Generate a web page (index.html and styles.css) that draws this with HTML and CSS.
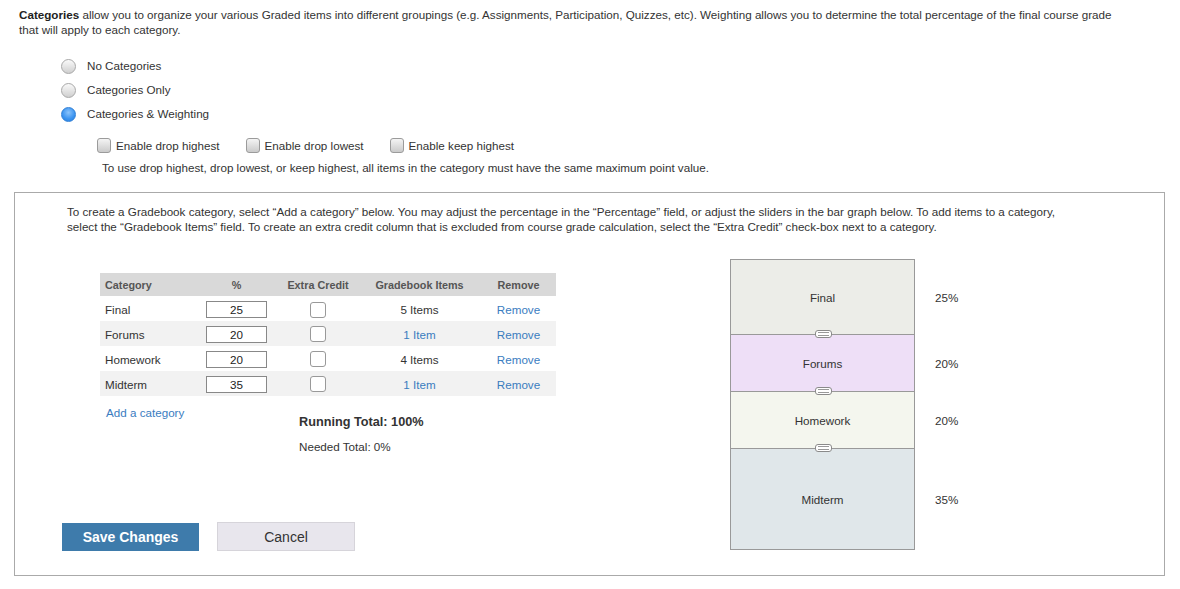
FILE: index.html
```html
<!DOCTYPE html>
<html>
<head>
<meta charset="utf-8">
<link rel="stylesheet" href="styles.css">
</head>
<body>
<div class="page">
  <p class="intro"><b>Categories</b> allow you to organize your various Graded items into different groupings (e.g. Assignments, Participation, Quizzes, etc). Weighting allows you to determine the total percentage of the final course grade that will apply to each category.</p>

  <div class="radios">
    <label class="radio-row"><span class="radio"></span>No Categories</label>
    <label class="radio-row"><span class="radio"></span>Categories Only</label>
    <label class="radio-row"><span class="radio on"></span>Categories &amp; Weighting</label>
  </div>

  <div class="options">
    <div class="opt-row">
      <label class="opt"><span class="cb"></span>Enable drop highest</label>
      <label class="opt"><span class="cb"></span>Enable drop lowest</label>
      <label class="opt"><span class="cb"></span>Enable keep highest</label>
    </div>
    <p class="opt-note">To use drop highest, drop lowest, or keep highest, all items in the category must have the same maximum point value.</p>
  </div>

  <div class="box">
    <p class="box-intro">To create a Gradebook category, select “Add a category” below. You may adjust the percentage in the “Percentage” field, or adjust the sliders in the bar graph below. To add items to a category, select the “Gradebook Items” field. To create an extra credit column that is excluded from course grade calculation, select the “Extra Credit” check-box next to a category.</p>

    <div class="main">
      <div class="left">
        <table class="cats">
          <thead>
            <tr><th class="c1">Category</th><th class="c2">%</th><th class="c3">Extra Credit</th><th class="c4">Gradebook Items</th><th class="c5">Remove</th></tr>
          </thead>
          <tbody>
            <tr><td class="c1">Final</td><td class="c2"><span class="num">25</span></td><td class="c3"><span class="ec"></span></td><td class="c4">5 Items</td><td class="c5"><a class="link">Remove</a></td></tr>
            <tr class="alt"><td class="c1">Forums</td><td class="c2"><span class="num">20</span></td><td class="c3"><span class="ec"></span></td><td class="c4"><a class="link">1 Item</a></td><td class="c5"><a class="link">Remove</a></td></tr>
            <tr><td class="c1">Homework</td><td class="c2"><span class="num">20</span></td><td class="c3"><span class="ec"></span></td><td class="c4">4 Items</td><td class="c5"><a class="link">Remove</a></td></tr>
            <tr class="alt"><td class="c1">Midterm</td><td class="c2"><span class="num">35</span></td><td class="c3"><span class="ec"></span></td><td class="c4"><a class="link">1 Item</a></td><td class="c5"><a class="link">Remove</a></td></tr>
          </tbody>
        </table>
        <div class="below">
          <a class="link add">Add a category</a>
          <div class="totals">
            <div class="running">Running Total: 100%</div>
            <div class="needed">Needed Total: 0%</div>
          </div>
        </div>
        <div class="buttons">
          <button class="btn save">Save Changes</button>
          <button class="btn cancel">Cancel</button>
        </div>
      </div>

      <div class="graph">
        <div class="g-row r-final"><div class="seg s-final">Final</div><div class="pct">25%</div></div>
        <div class="g-row r-forums"><div class="seg s-forums"><span class="handle"></span>Forums</div><div class="pct">20%</div></div>
        <div class="g-row r-home"><div class="seg s-home"><span class="handle"></span>Homework</div><div class="pct">20%</div></div>
        <div class="g-row r-mid"><div class="seg s-mid"><span class="handle"></span>Midterm</div><div class="pct">35%</div></div>
      </div>
    </div>
  </div>
</div>
</body>
</html>
```

FILE: styles.css
```css
* { box-sizing: border-box; }
html, body { margin: 0; padding: 0; background: #fff; }
body {
  font-family: "Liberation Sans", Arial, Helvetica, sans-serif;
  font-size: 11.65px;
  color: #333;
  width: 1180px;
}
.page { padding: 7px 0 0 0; }
p { margin: 0; }

.intro {
  padding: 0 50px 0 19px;
  line-height: 15px;
  color: #333;
}
.intro b { color: #222; }

.radios {
  display: flex;
  flex-direction: column;
  margin: 22px 0 0 61px;
  gap: 10px;
}
.radio-row {
  display: flex;
  align-items: center;
  height: 14px;
  line-height: 14px;
}
.radio {
  width: 15px; height: 15px;
  border-radius: 50%;
  border: 1px solid #a8a8a8;
  background: linear-gradient(#fafafa, #cfcfcf);
  margin-right: 11px;
  flex: none;
}
.radio.on {
  border-color: #2f7fd6;
  background: radial-gradient(circle at 50% 35%, #8ac3fb, #3a93f0 60%, #2a7fdc);
}

.options { margin: 17px 0 0 97px; }
.opt-row { display: flex; align-items: center; height: 15px; }
.opt { display: flex; align-items: center; margin-right: 26px; line-height: 15px; }
.cb {
  width: 14px; height: 15px;
  border: 1px solid #9b9b9b;
  border-radius: 3px;
  background: linear-gradient(#f4f4f4, #cacaca);
  margin-right: 5px;
  flex: none;
}
.opt-note { margin: 7px 0 0 5px; line-height: 15px; }

.box {
  margin: 17px 0 0 14px;
  width: 1151px;
  height: 384px;
  border: 1px solid #aaa;
  padding: 11px 0 24px 47px;
  display: flex;
  flex-direction: column;
}
.box-intro {
  padding-left: 5px;
  padding-right: 90px;
  line-height: 15px;
}
.main {
  display: flex;
  margin-top: 25px;
  flex: 1;
}
.left {
  width: 668px;
  display: flex;
  flex-direction: column;
}
.cats {
  margin: 14px 0 0 38px;
  border-collapse: collapse;
  width: 456px;
  table-layout: fixed;
}
.cats th {
  background: #d9d9d9;
  font-size: 10.8px;
  font-weight: bold;
  color: #555;
  height: 23px;
  padding: 0;
}
.cats td { height: 25px; padding: 1px 0 0 0; }
.cats tbody tr:first-child td { padding-top: 2px; }
.cats tr.alt td { background: #f2f2f2; }
.c1 { width: 95px; text-align: left; padding-left: 5px !important; }
.c2 { width: 83px; text-align: center; }
.c3 { width: 80px; text-align: center; }
.c4 { width: 123px; text-align: center; }
.c5 { width: 75px; text-align: center; }
.num {
  display: inline-block;
  width: 61px; height: 17px;
  border: 1px solid #888;
  background: #fff;
  line-height: 15px;
  text-align: center;
  vertical-align: middle;
  color: #222;
}
.ec {
  display: inline-block;
  width: 16px; height: 16px;
  border: 1px solid #999;
  border-radius: 3px;
  background: #fff;
  vertical-align: middle;
}
.link { color: #3a7cbf; cursor: pointer; }

.below {
  display: flex;
  margin: 10px 0 0 44px;
}
.add { width: 193px; line-height: 14px; }
.totals { padding-top: 8px; }
.running { font-weight: bold; font-size: 12.7px; color: #333; line-height: 16px; }
.needed { margin-top: 9px; line-height: 15px; }

.buttons {
  margin-top: auto;
  display: flex;
  align-items: flex-end;
  gap: 18px;
}
.btn {
  font-family: "Liberation Sans", Arial, Helvetica, sans-serif;
  height: 28px;
  font-size: 14px;
  cursor: pointer;
}
.save {
  width: 137px;
  background: #3e7bab;
  color: #fff;
  border: none;
  font-weight: bold;
}
.cancel {
  width: 138px;
  height: 29px;
  background: #e8e6ed;
  color: #333;
  border: 1px solid #d6d4da;
}

.graph {
  display: flex;
  flex-direction: column;
}
.g-row { display: flex; }
.seg {
  position: relative;
  width: 185px;
  border: 1px solid #999;
  border-bottom: none;
  display: flex;
  align-items: center;
  justify-content: center;
  color: #333;
  padding-top: 1px;
}
.pct { margin-left: 20px; display: flex; align-items: center; padding-top: 1px; }
.r-final .seg { height: 75px; background: #ecede8; }
.r-forums .seg { height: 57px; background: #eedff7; }
.r-home .seg { height: 57px; background: #f4f6ee; }
.r-mid .seg { height: 102px; background: #e0e7ea; border-bottom: 1px solid #999; }
.handle {
  position: absolute;
  left: 84px;
  top: -5px;
  width: 17px;
  height: 8px;
  border: 1px solid #8a8a8a;
  border-radius: 3px;
  background: #fff;
}
.handle::before, .handle::after {
  content: "";
  position: absolute;
  left: 2px; right: 2px;
  height: 1px;
  background: #999;
}
.handle::before { top: 1px; }
.handle::after { top: 4px; }
```
